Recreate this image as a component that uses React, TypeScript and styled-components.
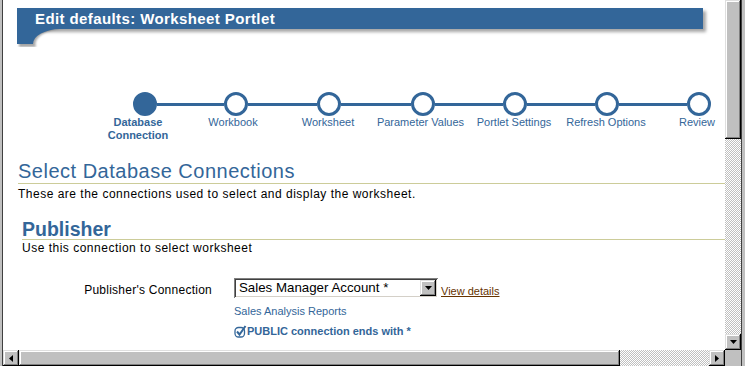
import React from 'react';
import styled, { createGlobalStyle, css } from 'styled-components';

const BLUE = '#336699';
const FACE = '#c0c0c0';
const FONT = '"Liberation Sans", Arial, sans-serif';

const GlobalStyle = createGlobalStyle`
  html, body { margin: 0; padding: 0; background: #fff; overflow: hidden; }
  body { font-family: ${FONT}; }
`;

const raised = css`
  background: ${FACE};
  box-shadow: inset -1px -1px #000, inset 1px 1px #dfdfdf, inset -2px -2px #808080, inset 2px 2px #fff;
`;

const checkered = css`
  background: repeating-conic-gradient(${FACE} 0 25%, #fff 0 50%) 0 0 / 2px 2px;
`;

const Window = styled.div`
  width: 745px;
  height: 366px;
  display: grid;
  grid-template-columns: 3px 722px 16px 4px;
  grid-template-rows: 350px 16px;
  background: ${FACE};
`;

const LeftFrame = styled.div`
  grid-column: 1;
  grid-row: 1 / span 2;
  box-sizing: border-box;
  background: ${FACE};
  border-right: 1px solid #404040;
`;

const RightFrame = styled.div`
  grid-column: 4;
  grid-row: 1 / span 2;
  box-sizing: border-box;
  background: ${FACE};
  border-left: 1px solid #404040;
`;

const Content = styled.div`
  grid-column: 2;
  grid-row: 1;
  background: #fff;
  overflow: hidden;
`;

const VScroll = styled.div`
  grid-column: 3;
  grid-row: 1;
  display: flex;
  flex-direction: column;
`;

const HScroll = styled.div`
  grid-column: 2;
  grid-row: 2;
  display: flex;
`;

const Corner = styled.div`
  grid-column: 3;
  grid-row: 2;
  background: ${FACE};
`;

const Thumb = styled.div<{ $size: number; $vertical?: boolean }>`
  ${raised};
  flex: none;
  ${(p) => (p.$vertical ? `height: ${p.$size}px;` : `width: ${p.$size}px;`)}
`;

const Track = styled.div`
  ${checkered};
  flex: 1;
`;

const ArrowButton = styled.div`
  ${raised};
  flex: none;
  width: 16px;
  height: 16px;
  display: flex;
  align-items: center;
  justify-content: center;
`;

const Header = styled.div`
  margin: 8px 22px 0 14px;
`;

const HeaderBar = styled.h2`
  position: relative;
  margin: 0;
  height: 21px;
  padding-left: 18px;
  background: ${BLUE};
  color: #fff;
  font: bold 15px/21px ${FONT};
  letter-spacing: 0.4px;
  box-shadow: 3px 3px 3px rgba(0, 0, 0, 0.35);
`;

const Flare = styled.svg`
  position: relative;
  display: block;
  width: 52px;
  height: 18px;
`;

const Train = styled.ol`
  list-style: none;
  margin: 45px 0 0 97px;
  padding: 0;
  display: grid;
  grid-template-columns: 90px 92px 94px 93px 92px 92px 92px;
`;

const Step = styled.li`
  display: flex;
  flex-direction: column;
  align-items: center;
`;

const Rail = styled.div`
  width: 100%;
  height: 24px;
  display: flex;
  align-items: center;
`;

const Seg = styled.span<{ $hidden?: boolean }>`
  flex: 1;
  height: 3px;
  background: ${(p) => (p.$hidden ? 'transparent' : BLUE)};
`;

const Dot = styled.span<{ $active?: boolean }>`
  flex: none;
  width: 24px;
  height: 24px;
  box-sizing: border-box;
  border-radius: 50%;
  border: 3px solid ${BLUE};
  background: ${(p) => (p.$active ? BLUE : '#fff')};
`;

const StepLabel = styled.span<{ $active?: boolean; $nudge?: number }>`
  margin-right: ${(p) => p.$nudge ?? 0}px;
  font: ${(p) => (p.$active ? 'bold' : 'normal')} 11px/13px ${FONT};
  color: ${BLUE};
  text-align: center;
  white-space: nowrap;
`;

const Section = styled.section`
  margin-top: 17px;
  padding-left: 15px;
`;

const PageTitle = styled.h1`
  margin: 0;
  font: normal 20px/24px ${FONT};
  letter-spacing: 0.5px;
  color: ${BLUE};
  border-bottom: 1px solid #cccc99;
`;

const Text = styled.p<{ $top: number }>`
  margin: ${(p) => p.$top}px 0 0;
  font: 12px/14px ${FONT};
  letter-spacing: 0.5px;
  color: #000;
`;

const SubSection = styled.div`
  margin: 18px 0 0 4px;
`;

const SubTitle = styled.h2`
  margin: 0;
  font: bold 19.5px/20px ${FONT};
  color: ${BLUE};
  border-bottom: 1px solid #cccc99;
`;

const Form = styled.div`
  margin-top: 23px;
  display: grid;
  grid-template-columns: 209px auto;
  column-gap: 22px;
  align-items: start;
`;

const FieldLabel = styled.label`
  margin-top: 5px;
  text-align: right;
  font: 12px/14px ${FONT};
  letter-spacing: 0.25px;
  color: #000;
  white-space: nowrap;
`;

const Field = styled.div`
  display: flex;
  flex-direction: column;
  align-items: flex-start;
`;

const ControlRow = styled.div`
  display: flex;
  align-items: flex-end;
`;

const SelectBox = styled.div`
  width: 204px;
  height: 20px;
  box-sizing: border-box;
  padding: 2px;
  display: flex;
  align-items: center;
  background: #fff;
  box-shadow: inset 1px 1px #808080, inset -1px -1px #fff, inset 2px 2px #404040, inset -2px -2px #d4d0c8;
`;

const SelectValue = styled.span`
  flex: 1;
  padding-left: 3px;
  font: 13.3px/16px ${FONT};
  color: #000;
  white-space: nowrap;
`;

const DetailsLink = styled.a`
  margin-left: 3px;
  font: 11px/13px ${FONT};
  color: #663300;
  text-decoration: underline;
`;

const Hint = styled.span<{ $bold?: boolean }>`
  margin-top: 7px;
  display: flex;
  align-items: center;
  font: ${(p) => (p.$bold ? 'bold' : 'normal')} 11px/13px ${FONT};
  color: ${BLUE};
  white-space: nowrap;
`;

const DownArrow = () => (
  <svg width="7" height="4" viewBox="0 0 7 4"><path d="M0 0H7L3.5 4Z" fill="#000" /></svg>
);
const LeftArrow = () => (
  <svg width="4" height="7" viewBox="0 0 4 7"><path d="M4 0V7L0 3.5Z" fill="#000" /></svg>
);
const RightArrow = () => (
  <svg width="4" height="7" viewBox="0 0 4 7"><path d="M0 0V7L4 3.5Z" fill="#000" /></svg>
);

const CheckIcon = () => (
  <svg width="13" height="13" viewBox="0 0 13 13" style={{ marginRight: 0 }}>
    <rect x="1" y="2.5" width="9.5" height="9.5" rx="3.5" fill="none" stroke={BLUE} strokeWidth="1.3" />
    <path d="M3 6.5L5.5 9.5L11.5 1" fill="none" stroke={BLUE} strokeWidth="2" />
  </svg>
);

const steps = [
  { label: 'Database\nConnection', nudge: 14 },
  { label: 'Workbook', nudge: 6 },
  { label: 'Worksheet', nudge: 2 },
  { label: 'Parameter Values', nudge: 4 },
  { label: 'Portlet Settings', nudge: 2 },
  { label: 'Refresh Options', nudge: 2 },
  { label: 'Review', nudge: 4 },
];

export default function App() {
  return (
    <>
      <GlobalStyle />
      <Window>
        <LeftFrame />
        <Content>
          <Header>
            <HeaderBar>Edit defaults: Worksheet Portlet</HeaderBar>
            <Flare viewBox="0 0 52 18">
              <defs>
                <filter id="fb" x="-20%" y="-20%" width="140%" height="140%">
                  <feGaussianBlur stdDeviation="0.8" />
                </filter>
              </defs>
              <path d="M2 0H46A27 15 0 0 0 19 18H2Z" fill="rgba(0,0,0,0.35)" filter="url(#fb)" />
              <path d="M0 0H43A27 15 0 0 0 16 15H0Z" fill={BLUE} />
            </Flare>
          </Header>

          <Train>
            {steps.map((s, i) => (
              <Step key={s.label}>
                <Rail>
                  <Seg $hidden={i === 0} />
                  <Dot $active={i === 0} />
                  <Seg $hidden={i === steps.length - 1} />
                </Rail>
                <StepLabel $active={i === 0} $nudge={s.nudge}>
                  {s.label.split('\n').map((l, j) => (
                    <React.Fragment key={l}>
                      {j > 0 && <br />}
                      {l}
                    </React.Fragment>
                  ))}
                </StepLabel>
              </Step>
            ))}
          </Train>

          <Section>
            <PageTitle>Select Database Connections</PageTitle>
            <Text $top={3}>These are the connections used to select and display the worksheet.</Text>
            <SubSection>
              <SubTitle>Publisher</SubTitle>
              <Text $top={1}>Use this connection to select worksheet</Text>
            </SubSection>
          </Section>

          <Form>
            <FieldLabel>Publisher's Connection</FieldLabel>
            <Field>
              <ControlRow>
                <SelectBox>
                  <SelectValue>Sales Manager Account *</SelectValue>
                  <ArrowButton><DownArrow /></ArrowButton>
                </SelectBox>
                <DetailsLink href="#">View details</DetailsLink>
              </ControlRow>
              <Hint>Sales Analysis Reports</Hint>
              <Hint $bold><CheckIcon />PUBLIC connection ends with *</Hint>
            </Field>
          </Form>
        </Content>
        <VScroll>
          <Thumb $vertical $size={139} />
          <Track />
          <ArrowButton><DownArrow /></ArrowButton>
        </VScroll>
        <HScroll>
          <ArrowButton><LeftArrow /></ArrowButton>
          <Thumb $size={601} />
          <Track />
          <ArrowButton><RightArrow /></ArrowButton>
        </HScroll>
        <Corner />
        <RightFrame />
      </Window>
    </>
  );
}
